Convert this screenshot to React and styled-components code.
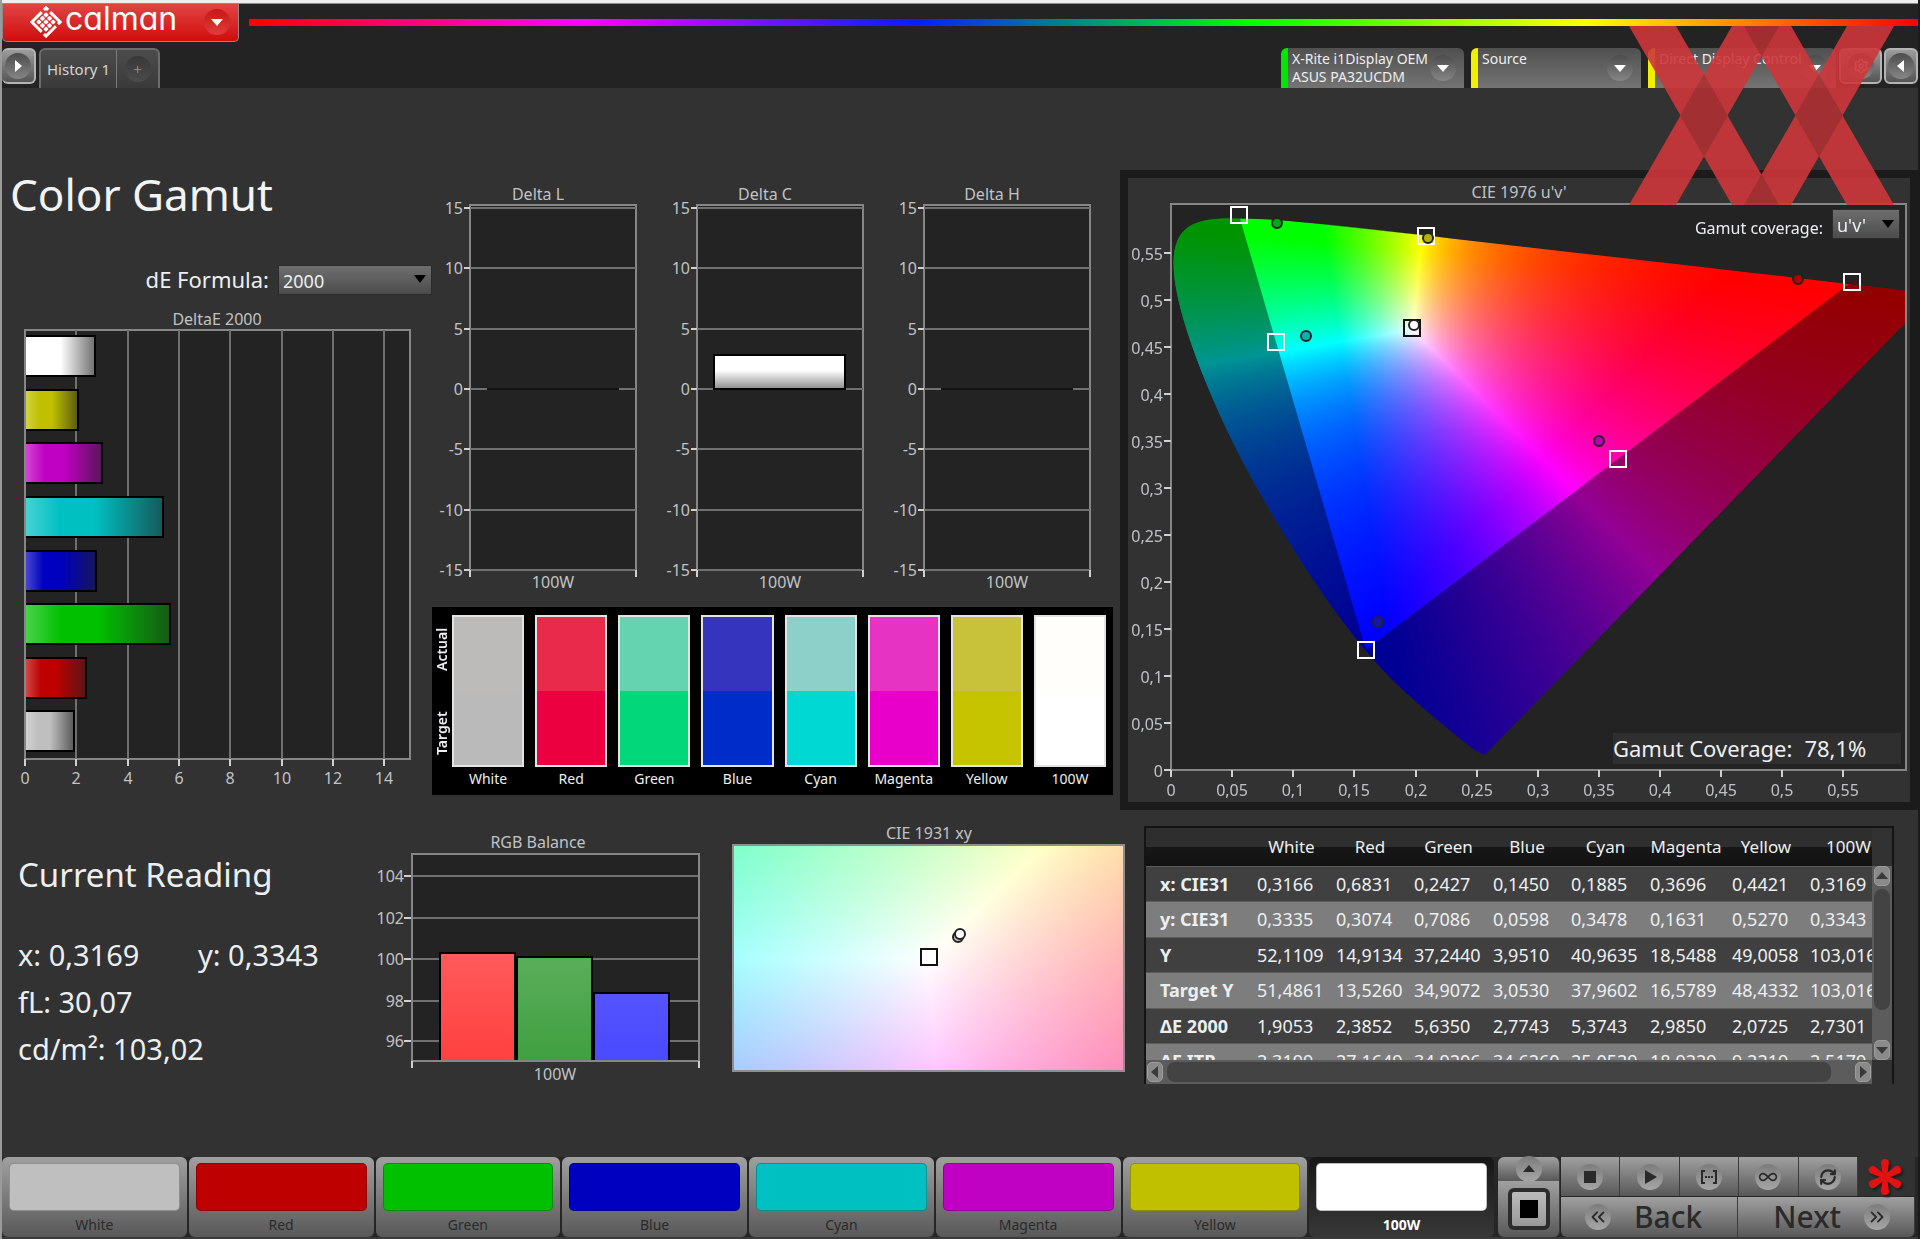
import React, { useLayoutEffect, useRef } from "react";
import styled, { createGlobalStyle, css } from "styled-components";
import { ChevronsLeft, ChevronsRight, Infinity as Loop, RefreshCw, Settings } from "lucide-react";

const GlobalStyle = createGlobalStyle`
    * {
        box-sizing: border-box;
    }
    body {
        margin: 0;
        background: #323232;
        color: #eceff1;
        font-family: "Noto Sans", "Open Sans", sans-serif;
        font-size: 16px;
    }
    button, select {
        font-family: inherit;
        margin: 0;
    }
`;

/* ---------- data ---------- */

const patches = [
    { name: "White", color: "#bfbfbf", actual: "#bcbbba", target: "#bababa", dE: 1.9053 },
    { name: "Red", color: "#bf0000", actual: "#ea2a4a", target: "#ec0040", dE: 2.3852 },
    { name: "Green", color: "#00c000", actual: "#64d3af", target: "#02d879", dE: 5.635 },
    { name: "Blue", color: "#0000c0", actual: "#3434bf", target: "#002cca", dE: 2.7743 },
    { name: "Cyan", color: "#00c0c2", actual: "#8dcfc9", target: "#00d8d4", dE: 5.3743 },
    { name: "Magenta", color: "#c000c2", actual: "#e633c4", target: "#e800ca", dE: 2.985 },
    { name: "Yellow", color: "#c0c000", actual: "#c8c23a", target: "#c6c400", dE: 2.0725 },
    { name: "100W", color: "#ffffff", actual: "#fffefa", target: "#ffffff", dE: 2.7301 },
];

const readings = [
    ["x: CIE31", "0,3166", "0,6831", "0,2427", "0,1450", "0,1885", "0,3696", "0,4421", "0,3169"],
    ["y: CIE31", "0,3335", "0,3074", "0,7086", "0,0598", "0,3478", "0,1631", "0,5270", "0,3343"],
    ["Y", "52,1109", "14,9134", "37,2440", "3,9510", "40,9635", "18,5488", "49,0058", "103,0165"],
    ["Target Y", "51,4861", "13,5260", "34,9072", "3,0530", "37,9602", "16,5789", "48,4332", "103,0165"],
    ["ΔE 2000", "1,9053", "2,3852", "5,6350", "2,7743", "5,3743", "2,9850", "2,0725", "2,7301"],
    ["ΔE ITP", "2,3199", "27,1649", "34,9206", "34,6260", "25,0529", "18,9229", "9,2219", "2,5179"],
];

// spectral locus, CIE 1931 xy
const locus = [
    [0.1741, 0.005], [0.1714, 0.0051], [0.1644, 0.0109], [0.1566, 0.0177], [0.144, 0.0297],
    [0.1355, 0.0399], [0.1241, 0.0578], [0.1096, 0.0868], [0.0913, 0.1327], [0.0687, 0.2007],
    [0.0454, 0.295], [0.0235, 0.4127], [0.0082, 0.5384], [0.0039, 0.6548], [0.0139, 0.7502],
    [0.0389, 0.812], [0.0743, 0.8338], [0.1142, 0.8262], [0.1547, 0.8059], [0.2296, 0.7543],
    [0.3016, 0.6923], [0.3731, 0.6245], [0.4441, 0.5547], [0.5125, 0.4866], [0.5752, 0.4242],
    [0.627, 0.3725], [0.6915, 0.3083], [0.719, 0.2809], [0.7347, 0.2653],
];

const gamutTriangle = [[0.0556, 0.59], [0.5566, 0.519], [0.1593, 0.128]];
const gamutTargets = [...gamutTriangle, [0.2088, 0.568], [0.0857, 0.455], [0.3656, 0.3307]];
const gamutReadings = [
    [0.087, 0.5823, "#00a818"],
    [0.2103, 0.566, "#b4b400"],
    [0.5128, 0.522, "#b80000"],
    [0.1102, 0.4622, "#00b4b8"],
    [0.35, 0.3505, "#b000b8"],
    [0.1693, 0.1576, "#1414b8"],
];

/* ---------- colour maths ---------- */

const xyToRgb = (x, y) => {
    const X = x / y;
    const Z = (1 - x - y) / y;
    const rgb = [
        3.2406 * X - 1.5372 - 0.4986 * Z,
        -0.9689 * X + 1.8758 + 0.0415 * Z,
        0.0557 * X - 0.204 + 1.057 * Z,
    ].map((c) => Math.max(0, c));
    const max = Math.max(...rgb);
    return rgb.map((c) => (c / max) * 255);
};

const uvToXy = (u, v) => {
    const d = 6 * u - 16 * v + 12;
    return [(9 * u) / d, (4 * v) / d];
};

const xyToUv = (x, y) => {
    const d = -2 * x + 12 * y + 3;
    return [(4 * x) / d, (9 * y) / d];
};

const paint = (width, height, toXy) => {
    const layer = document.createElement("canvas");
    layer.width = width;
    layer.height = height;
    const ctx = layer.getContext("2d");
    const image = ctx.createImageData(width, height);
    for (let j = 0; j < height; j++) {
        for (let i = 0; i < width; i++) {
            const [r, g, b] = xyToRgb(...toXy((i + 0.5) / width, 1 - (j + 0.5) / height));
            image.data.set([r, g, b, 255], (j * width + i) * 4);
        }
    }
    ctx.putImageData(image, 0, 0);
    return layer;
};

/* ---------- header ---------- */

const Page = styled.div`
    min-height: 100vh;
    display: flex;
    flex-direction: column;
    position: relative;
    overflow: hidden;
    background: #323232;
    border-left: 2px solid #9b9b9b;
    border-right: 2px solid #1b1b1b;
`;

const Header = styled.header`
    background: #232323;
    border-top: 3px solid #eeeeee;
    height: 88px;
`;

const BrandRow = styled.div`
    display: flex;
    align-items: flex-start;
    gap: 10px;
    height: 45px;
    border-top: 1px solid #8c8c8c;
`;

const BrandButton = styled.button`
    width: 237px;
    height: 38px;
    padding: 0 8px 2px 27px;
    display: flex;
    align-items: center;
    gap: 3px;
    color: white;
    background: linear-gradient(#e24444, #d00d0d);
    border: 1px solid #8a8a8a;
    border-top: none;
    border-radius: 0 0 5px 5px;
`;

const BrandName = styled.span`
    flex: 1;
    text-align: left;
    padding-bottom: 6px;
    font-family: Inter, sans-serif;
    font-size: 32px;
    line-height: 30px;
    font-weight: 400;
    font-feature-settings: "cv11";
`;

const Rainbow = styled.div`
    flex: 1;
    height: 7px;
    margin-top: 15px;
    background: linear-gradient(90deg, #f00, #f0f 20%, #0020ff 40%, #0f0 60%, #ff0 80%, #f00);
`;

const TabRow = styled.div`
    height: 40px;
    display: flex;
    align-items: flex-start;
`;

const Knob = styled.span`
    width: 26px;
    height: 26px;
    flex: none;
    display: flex;
    align-items: center;
    justify-content: center;
    border-radius: 50%;
    color: ${(p) => p.$ink || "white"};
    background: ${(p) => p.$fill || "linear-gradient(#4c4c4c, #868686)"};
`;

const SideButton = styled.button`
    width: ${(p) => (p.$wide ? "43px" : "34px")};
    height: 36px;
    padding: 0;
    display: flex;
    align-items: center;
    justify-content: center;
    background: linear-gradient(#9c9c9c, #555555);
    border: 2px solid #b4b4b4;
    border-left-width: ${(p) => (p.$flush ? "0" : "2px")};
    border-radius: 6px;
`;

const HistoryTabs = styled.div`
    display: flex;
    height: 40px;
    margin-left: 3px;
    border: 2px solid #6c6c6c;
    border-bottom: none;
    border-radius: 6px 6px 0 0;
    background: linear-gradient(#4c4c4c, #3a3a3a);
`;

const HistoryTab = styled.button`
    padding: 0 7px;
    min-width: 42px;
    display: flex;
    align-items: center;
    justify-content: center;
    font-size: 15px;
    color: #d4d4d4;
    background: none;
    border: none;
    &:first-child {
        padding: 0 6px;
    }
    & + & {
        border-left: 1px solid #7a7a7a;
    }
`;

const Devices = styled.div`
    flex: 1;
    display: flex;
    justify-content: flex-end;
    gap: 7px;
`;

const Device = styled.button`
    width: ${(p) => p.$width};
    height: 40px;
    padding: 2px 8px 0 4px;
    display: flex;
    gap: 2px;
    align-items: flex-start;
    text-align: left;
    font-size: 14px;
    line-height: 18px;
    white-space: nowrap;
    color: #eeeeee;
    background: linear-gradient(#505050, #747474);
    border: none;
    border-left: 7px solid ${(p) => p.$status};
    border-radius: 6px 6px 0 0;
    span:first-child {
        flex: 1;
        min-width: 0;
    }
    ${Knob} {
        margin-top: 5px;
    }
`;

const SideButtons = styled.div`
    display: flex;
    gap: 2px;
    margin-left: 3px;
`;

const Watermark = styled.svg`
    position: absolute;
    top: 26px;
    right: 24px;
    width: 265px;
    height: 179px;
    opacity: 0.9;
    pointer-events: none;
`;

/* ---------- content ---------- */

const Main = styled.main`
    flex: 1;
`;

const TopRow = styled.section`
    display: grid;
    grid-template-columns: 430fr 688fr 798fr;
    padding-top: 82px;
`;

const BottomRow = styled.section`
    display: grid;
    grid-template-columns: 370fr 332fr 440fr 750fr 24fr;
    align-items: start;
`;

const ChartSlot = styled.div`
    padding-top: ${(p) => p.$top};
`;

const Chart = styled.svg`
    display: block;
    width: 100%;
    height: auto;
    font-size: 16px;
    fill: #c0c3c5;
    canvas {
        display: block;
        width: 100%;
        height: 100%;
    }
`;

const Title = styled.h1`
    margin: 0;
    padding-left: 8px;
    font-size: 44px;
    line-height: 48px;
    font-weight: 400;
    color: #f2f4f4;
`;

const FormulaRow = styled.div`
    display: flex;
    justify-content: flex-end;
    align-items: center;
    gap: 9px;
    height: 30px;
    margin-top: 46px;
    font-size: 22px;
`;

const SelectBox = styled.span`
    position: relative;
    width: ${(p) => p.$width};
    height: 30px;
    svg {
        position: absolute;
        right: 6px;
        top: 11px;
        pointer-events: none;
    }
`;

const Select = styled.select`
    appearance: none;
    width: 100%;
    height: 100%;
    padding: 2px 4px 0;
    font-size: 18px;
    color: #eceff1;
    background: linear-gradient(#6e6e6e, #4c4c4c);
    border: 1px solid #2a2a2a;
    border-radius: 0;
`;

const Middle = styled.div`
    padding: 8px 7px 0 0;
`;

const DeltaRow = styled.div`
    display: grid;
    grid-template-columns: repeat(3, 1fr);
`;

const SwatchPanel = styled.div`
    display: flex;
    margin-top: 7px;
    padding: 8px 7px 4px 0;
    background: black;
    font-size: 14px;
`;

const SwatchSides = styled.div`
    width: 20px;
    height: 152px;
    display: flex;
    flex-direction: column-reverse;
    gap: 16px;
    font-weight: 600;
    span {
        flex: 1;
        line-height: 20px;
        text-align: center;
        writing-mode: vertical-rl;
        transform: rotate(180deg);
    }
`;

const SwatchGrid = styled.div`
    flex: 1;
    display: grid;
    grid-template-columns: repeat(8, 1fr);
    gap: 11px;
`;

const SwatchItem = styled.div`
    text-align: center;
    line-height: 24px;
`;

const SwatchFill = styled.div`
    height: 152px;
    border: 2px solid #e4e4e4;
    background: linear-gradient(${(p) => p.$actual} 50%, ${(p) => p.$target} 50%);
`;

const GamutPanel = styled.div`
    position: relative;
    border: 8px solid #1b1b1b;
`;

const CoverageControl = styled.label`
    position: absolute;
    top: 31px;
    right: 10px;
    display: flex;
    align-items: flex-end;
    gap: 9px;
`;

const CoverageReadout = styled.div`
    position: absolute;
    right: 9px;
    bottom: 38px;
    width: 288px;
    height: 31px;
    display: flex;
    gap: 12px;
    font-size: 22px;
    line-height: 31px;
    white-space: nowrap;
    background: #2f2f2f;
`;

const Reading = styled.div`
    padding: 41px 0 0 16px;
    font-size: 29px;
    line-height: 47px;
    white-space: nowrap;
    h2 {
        margin: 0 0 33px;
        font-size: 33px;
        font-weight: 400;
    }
`;

const ReadingPair = styled.div`
    display: grid;
    grid-template-columns: 180px 1fr;
`;

/* ---------- results table ---------- */

const TableFrame = styled.div`
    margin-top: 16px;
    display: grid;
    grid-template-columns: 1fr 20px;
    border: 2px solid #141414;
    border-bottom: none;
`;

const TableScroll = styled.div`
    height: 232px;
    overflow: hidden;
`;

const Table = styled.table`
    width: 746px;
    table-layout: fixed;
    border-collapse: collapse;
    font-size: 18px;
    line-height: 24px;
    white-space: nowrap;
    th, td {
        padding: 0 0 0 5px;
        text-align: left;
    }
    tbody th {
        padding-left: 14px;
        font-weight: 700;
    }
`;

const HeadRow = styled.tr`
    height: 38px;
    background: linear-gradient(#2e2e2e 50%, #171717 50%, #121212);
    && th {
        padding: 0;
        text-align: center;
        font-weight: 400;
        font-size: 17px;
    }
`;

const BodyRow = styled.tr`
    height: 35px;
    background: #404040;
    &:nth-child(even) {
        height: 36px;
        background: #7d7d7d;
    }
    th, td {
        border-top: 1px solid #5c5c5c;
    }
`;

const bar = css`
    display: flex;
    align-items: center;
    background: #5c5c5c;
`;

const VerticalBar = styled.div`
    ${bar}
    flex-direction: column;
    margin-top: 38px;
    gap: 3px;
`;

const HorizontalBar = styled.div`
    ${bar}
    height: 24px;
    gap: 4px;
    padding: 0 1px;
`;

const Thumb = styled.div`
    border-radius: 8px;
    background: #434343;
    ${(p) => (p.$vertical ? "width: 16px; height: 121px; margin-bottom: auto;" : "height: 20px; flex: 1; margin-right: 20px;")}
`;

const BarButton = styled.button`
    width: 16px;
    height: 20px;
    padding: 0;
    display: flex;
    align-items: center;
    justify-content: center;
    color: #3a3a3a;
    background: #8a8a8a;
    border: 1px solid #9c9c9c;
    border-radius: 5px;
`;

/* ---------- footer ---------- */

const Footer = styled.footer`
    display: flex;
    padding: 0 3px 0 0;
    background: #262626;
    border-bottom: 2px solid #3a3a3a;
`;

const PatchBar = styled.div`
    flex: 1;
    display: grid;
    grid-template-columns: repeat(8, 1fr);
    gap: 2px;
`;

const steel = "linear-gradient(#a0a0a0, #585858)";

const PatchButton = styled.button`
    height: 80px;
    padding: 6px 7px 0;
    font-size: 14px;
    line-height: 28px;
    font-weight: ${(p) => (p.$active ? 700 : 400)};
    color: ${(p) => (p.$active ? "white" : "#2a2a2a")};
    background: ${(p) => (p.$active ? "linear-gradient(#161616, #383838)" : steel)};
    border: none;
    border-radius: 6px;
`;

const PatchColor = styled.span`
    display: block;
    height: 48px;
    border-radius: 5px;
    border: 1px solid rgba(0, 0, 0, 0.25);
    background: ${(p) => p.$color};
`;

const StopColumn = styled.div`
    width: 62px;
    margin: 0 1px 0 4px;
    display: flex;
    flex-direction: column;
`;

const FlatButton = styled.button`
    flex: ${(p) => p.$flex || 1};
    min-width: 0;
    height: ${(p) => p.$height};
    padding: 0;
    display: flex;
    align-items: center;
    justify-content: center;
    color: #2a2a2a;
    background: ${steel};
    border: none;
    border-right: 1px solid #3c3c3c;
    border-radius: ${(p) => p.$radius || "0"};
`;

const StepButton = styled(FlatButton)`
    padding: 0 24px;
    gap: 23px;
    justify-content: ${(p) => p.$justify};
    font-size: 30px;
    line-height: 36px;
    font-weight: 500;
`;

const StopFrame = styled.span`
    width: 42px;
    height: 42px;
    flex: none;
    display: flex;
    align-items: center;
    justify-content: center;
    border: 4px solid #2c2c2c;
    border-radius: 6px;
    background: linear-gradient(#bcbcbc, #989898);
    &::after {
        content: "";
        width: 18px;
        height: 18px;
        background: black;
    }
`;

const Transport = styled.div`
    width: 354px;
    display: grid;
    gap: 1px;
`;

const TransportRow = styled.div`
    display: flex;
`;

const AsteriskSlot = styled.div`
    width: 57px;
    padding-right: 3px;
    display: flex;
    align-items: center;
    justify-content: center;
    background: #323232;
    svg {
        filter: drop-shadow(2px 2px 1px #1a1a1a);
    }
`;

/* ---------- pieces ---------- */

const Triangle = ({ dir = "down", size = 12 }) => {
    const turn = { down: 0, left: 90, up: 180, right: 270 }[dir];
    return (
        <svg width={size} height={size} viewBox="0 0 12 12" aria-hidden="true">
            <path d="M0 3h12l-6 7z" fill="currentColor" transform={`rotate(${turn} 6 6)`} />
        </svg>
    );
};

const DropDown = ({ id, value, width }) => (
    <SelectBox $width={width}>
        <Select id={id} defaultValue={value}>
            <option>{value}</option>
        </Select>
        <svg width="12" height="8" viewBox="0 0 12 8" aria-hidden="true">
            <path d="M0 0h12L6 8z" fill="black" />
        </svg>
    </SelectBox>
);

const BrandMark = () => (
    <svg width="32" height="32" viewBox="-16 -16 32 32" aria-hidden="true">
        <g transform="rotate(45)">
            <path
                d="M-10 -7v-3h3M-4 -10h14v3M10 -4v14h-3M4 10h-14v-14"
                fill="none"
                stroke="white"
                strokeWidth="3"
            />
            {[-5, 0, 5].map((x) =>
                [-5, 0, 5].map((y) => (
                    <rect key={`${x}${y}`} x={x - 2} y={y - 2} width="4" height="4" rx="1" fill="white" />
                ))
            )}
        </g>
    </svg>
);

const Stripes = () => (
    <Watermark viewBox="0 0 265 179" aria-hidden="true">
        <g fill="#ce373a">
            <path d="M0 0h47l103 179h-47z" />
            <path d="M103 0h47L47 179H0z" />
            <path d="M115 0h47l103 179h-47z" />
            <path d="M218 0h47L162 179h-47z" />
        </g>
        <g fill="#ae3033">
            <path d="M75 48l24 41.500-24 41.500-24-41.500z" />
            <path d="M190 48l24 41.500-24 41.500-24-41.500z" />
            <path d="M115 0h35l-17.500 31z" />
            <path d="M115 179h35l-17.500-31z" />
        </g>
    </Watermark>
);

const GRID = "#707070";
const FRAME = "#868686";

const DeltaEChart = () => {
    const left = 23;
    const top = 36;
    const width = 385;
    const height = 429;
    const unit = width / 15;
    const slot = height / 8;
    const list = [...patches].reverse();
    return (
        <Chart viewBox="0 0 430 500" role="img" aria-label="DeltaE 2000">
            <defs>
                <linearGradient id="sheen">
                    <stop offset="0" stopColor="#fff" stopOpacity="0.28" />
                    <stop offset="0.25" stopColor="#fff" stopOpacity="0" />
                    <stop offset="0.5" stopColor="#222" stopOpacity="0" />
                    <stop offset="1" stopColor="#222" stopOpacity="0.65" />
                </linearGradient>
            </defs>
            <text x="215" y="31" textAnchor="middle">DeltaE 2000</text>
            <rect x={left} y={top} width={width} height={height} fill="#232323" stroke={FRAME} strokeWidth="2" />
            {[0, 2, 4, 6, 8, 10, 12, 14].map((v) => {
                const x = Math.round(left + v * unit);
                return (
                    <g key={v}>
                        {v > 0 && <path d={`M${x} ${top}V${top + height}`} stroke={GRID} strokeWidth="2" />}
                        <path d={`M${x} ${top + height}v7`} stroke="#d0d0d0" strokeWidth="2" />
                        <text x={x} y="490" textAnchor="middle">{v}</text>
                    </g>
                );
            })}
            {list.map((p, i) => {
                const rect = {
                    x: left + 1,
                    y: Math.round(top + slot * i + 6),
                    width: Math.round(p.dE * unit) - 1,
                    height: 40,
                };
                return (
                    <g key={p.name}>
                        <rect {...rect} fill={p.color} />
                        <rect {...rect} fill="url(#sheen)" />
                        <path
                            d={`M${rect.x} ${rect.y}h${rect.width}v${rect.height}H${rect.x}`}
                            fill="none"
                            stroke="black"
                            strokeWidth="2"
                        />
                    </g>
                );
            })}
        </Chart>
    );
};

const DeltaChart = ({ title, value }) => {
    const y = (v) => Math.round(211 - v * 12.07);
    return (
        <Chart viewBox="0 0 227 422" role="img" aria-label={title}>
            <defs>
                <linearGradient id="fade" x2="0" y2="1">
                    <stop offset="0.45" stopColor="white" />
                    <stop offset="1" stopColor="#8c8c8c" />
                </linearGradient>
            </defs>
            <text x="106" y="22" textAnchor="middle">{title}</text>
            <rect x="38" y="27" width="166" height="365" fill="#232323" stroke={FRAME} strokeWidth="2" />
            {[15, 10, 5, 0, -5, -10, -15].map((v) => (
                <g key={v}>
                    <path d={`M38 ${y(v)}h166`} stroke={GRID} strokeWidth="2" />
                    <path d={`M32 ${y(v)}h6`} stroke="#d0d0d0" strokeWidth="2" />
                    <text x="31" y={y(v) + 6} textAnchor="end">{v}</text>
                </g>
            ))}
            <path d="M38 392v7M204 392v7" stroke="#d0d0d0" strokeWidth="2" />
            {value ? (
                <rect x="55" y={y(value)} width="131" height={211 - y(value)} fill="url(#fade)" stroke="black" strokeWidth="2" />
            ) : (
                <path d="M55 211h132" stroke="#141414" strokeWidth="2" />
            )}
            <text x="121" y="410" textAnchor="middle">100W</text>
        </Chart>
    );
};

const GamutCanvas = ({ width, height }) => {
    const ref = useRef(null);
    useLayoutEffect(() => {
        const ctx = ref.current.getContext("2d");
        const px = ([u, v]) => [(u / 0.601) * width, height - (v / 0.602) * height];
        const points = locus.map(([x, y]) => px(xyToUv(x, y)));
        const layer = paint(width, height, (a, b) => uvToXy(a * 0.601, b * 0.602));

        ctx.clearRect(0, 0, width, height);
        ctx.save();
        ctx.beginPath();
        ctx.moveTo(...points[0]);
        for (let i = 1; i < points.length - 1; i++) {
            const [x, y] = points[i];
            const [nx, ny] = points[i + 1];
            ctx.quadraticCurveTo(x, y, (x + nx) / 2, (y + ny) / 2);
        }
        ctx.lineTo(...points[points.length - 1]);
        ctx.closePath();
        ctx.clip();
        ctx.drawImage(layer, 0, 0);

        // dim everything outside of the target gamut
        ctx.beginPath();
        ctx.rect(0, 0, width, height);
        gamutTriangle.map(px).forEach(([x, y], i) => (i ? ctx.lineTo(x, y) : ctx.moveTo(x, y)));
        ctx.closePath();
        ctx.fillStyle = "rgba(0, 0, 0, 0.42)";
        ctx.fill("evenodd");
        ctx.restore();
    }, [width, height]);
    return <canvas ref={ref} width={width} height={height} />;
};

const GamutChart = () => {
    const x = (u) => Math.round(43 + u * 1222.7);
    const y = (v) => Math.round(592 - v * 940);
    const ticks = Array.from({ length: 12 }, (_, i) => i * 0.05);
    const label = (t) => String(Number(t.toFixed(2))).replace(".", ",");
    return (
        <Chart viewBox="0 0 782 624" role="img" aria-label="CIE 1976 u'v'">
            <text x="391" y="20" textAnchor="middle">CIE 1976 u'v'</text>
            <rect x="43" y="26" width="735" height="566" fill="#232323" />
            <foreignObject x="43" y="26" width="735" height="566">
                <GamutCanvas width={735} height={566} />
            </foreignObject>
            <rect x="43" y="26" width="735" height="566" fill="none" stroke={FRAME} strokeWidth="2" />
            {ticks.map((t) => (
                <g key={t}>
                    <path d={`M36 ${y(t)}h7M${x(t)} 592v7`} stroke="#d0d0d0" strokeWidth="2" />
                    <text x="35" y={y(t) + 7} textAnchor="end">{label(t)}</text>
                    <text x={x(t)} y="618" textAnchor="middle">{label(t)}</text>
                </g>
            ))}
            <g fill="none" stroke="white" strokeWidth="2">
                {gamutTargets.map(([u, v]) => (
                    <rect key={u} x={x(u) - 8} y={y(v) - 8} width="16" height="16" />
                ))}
            </g>
            {gamutReadings.map(([u, v, fill]) => (
                <circle key={u} cx={x(u)} cy={y(v)} r="5" fill={fill} stroke="#222" strokeWidth="2" />
            ))}
            <rect x={x(0.1972) - 8} y={y(0.4707) - 8} width="16" height="16" fill="none" stroke="#111" strokeWidth="2" />
            <circle cx={x(0.1985)} cy={y(0.4738)} r="5" fill="white" stroke="#222" strokeWidth="2" />
        </Chart>
    );
};

const balance = [
    { x: 68, y: 127, from: "#ff5a5a", to: "#ff4040" },
    { x: 145, y: 131, from: "#5aae5a", to: "#40a040" },
    { x: 222, y: 167, from: "#5454ff", to: "#4a4aff" },
];

const BalanceChart = () => (
    <Chart viewBox="0 0 332 262" role="img" aria-label="RGB Balance">
        <text x="166" y="22" textAnchor="middle">RGB Balance</text>
        <rect x="40" y="28" width="287" height="207" fill="#232323" />
        {[[104, 50], [102, 92], [100, 133], [98, 175], [96, 215]].map(([v, y]) => (
            <g key={v}>
                <path d={`M40 ${y}h287`} stroke={GRID} strokeWidth="2" />
                <path d={`M32 ${y}h8`} stroke="#d0d0d0" strokeWidth="2" />
                <text x="32" y={y + 6} textAnchor="end">{v}</text>
            </g>
        ))}
        {balance.map((b) => (
            <g key={b.from}>
                <defs>
                    <linearGradient id={`b${b.x}`} x2="0" y2="1">
                        <stop offset="0" stopColor={b.from} />
                        <stop offset="1" stopColor={b.to} />
                    </linearGradient>
                </defs>
                <rect x={b.x} y={b.y} width="75" height={235 - b.y} fill={`url(#b${b.x})`} stroke="black" strokeWidth="2" />
            </g>
        ))}
        <rect x="40" y="28" width="287" height="207" fill="none" stroke={FRAME} strokeWidth="2" />
        <path d="M40 235v7M327 235v7" stroke="#d0d0d0" strokeWidth="2" />
        <text x="183" y="254" textAnchor="middle">100W</text>
    </Chart>
);

const WhiteCanvas = ({ width, height }) => {
    const ref = useRef(null);
    useLayoutEffect(() => {
        const layer = paint(width, height, (a, b) => [0.3127 + (a - 0.5) * 0.053, 0.329 + (b - 0.5) * 0.052]);
        ref.current.getContext("2d").drawImage(layer, 0, 0);
    }, [width, height]);
    return <canvas ref={ref} width={width} height={height} />;
};

const WhiteChart = () => (
    <Chart viewBox="0 0 440 270" role="img" aria-label="CIE 1931 xy">
        <text x="225" y="21" textAnchor="middle">CIE 1931 xy</text>
        <foreignObject x="29" y="27" width="391" height="226">
            <WhiteCanvas width={391} height={226} />
        </foreignObject>
        <rect x="29" y="27" width="391" height="226" fill="none" stroke="#8f8f8f" strokeWidth="2" />
        <rect x="217" y="131" width="16" height="16" fill="white" stroke="#111" strokeWidth="2" />
        <circle cx="254" cy="119" r="5" fill="#bbb" stroke="#222" strokeWidth="2" />
        <circle cx="256" cy="116" r="5" fill="white" stroke="#222" strokeWidth="2" />
    </Chart>
);

const Asterisk = () => (
    <svg width="36" height="38" viewBox="-18 -19 36 38" aria-hidden="true">
        {[0, 60, 120, 180, 240, 300].map((a) => (
            <path key={a} d="M-2 0L-4 -14Q-4 -18 0 -18Q4 -18 4 -14L2 0z" fill="#e01212" transform={`rotate(${a})`} />
        ))}
    </svg>
);

const columns = [106, 79, 78, 79, 78, 79, 82, 78, 87];

const ResultsTable = () => (
    <TableFrame>
        <TableScroll>
            <Table>
                <colgroup>
                    {columns.map((w, i) => (
                        <col key={i} width={w} />
                    ))}
                </colgroup>
                <thead>
                    <HeadRow>
                        <th />
                        {patches.map((p) => (
                            <th key={p.name} scope="col">{p.name}</th>
                        ))}
                    </HeadRow>
                </thead>
                <tbody>
                    {readings.map(([name, ...values]) => (
                        <BodyRow key={name}>
                            <th scope="row">{name}</th>
                            {values.map((v, i) => (
                                <td key={i}>{v}</td>
                            ))}
                        </BodyRow>
                    ))}
                </tbody>
            </Table>
        </TableScroll>
        <VerticalBar>
            <BarButton aria-label="Scroll up"><Triangle dir="up" /></BarButton>
            <Thumb $vertical />
            <BarButton aria-label="Scroll down"><Triangle /></BarButton>
        </VerticalBar>
        <HorizontalBar>
            <BarButton aria-label="Scroll left"><Triangle dir="left" /></BarButton>
            <Thumb />
            <BarButton aria-label="Scroll right"><Triangle dir="right" /></BarButton>
        </HorizontalBar>
    </TableFrame>
);

const transport = [
    { label: "Stop", icon: <path d="M2 2h12v12H2z" fill="currentColor" /> },
    { label: "Read", icon: <path d="M3 1l12 7-12 7z" fill="currentColor" /> },
    {
        label: "Read series",
        icon: (
            <g fill="none" stroke="currentColor" strokeWidth="2">
                <path d="M4 2H1v12h3M12 2h3v12h-3" />
                <path d="M4 8h2M7 8h2M10 8h2" />
            </g>
        ),
    },
];

const key = { $fill: "linear-gradient(#7c7c7c, #a6a6a6)", $ink: "#2a2a2a" };

const App = () => {
    return (
        <>
            <GlobalStyle />
            <Page>
                <Header>
                    <BrandRow>
                        <BrandButton>
                            <BrandMark />
                            <BrandName>calman</BrandName>
                            <Knob $fill="linear-gradient(#c81616, #e03c3c)"><Triangle /></Knob>
                        </BrandButton>
                        <Rainbow />
                    </BrandRow>
                    <TabRow>
                        <SideButton $flush aria-label="Open panel">
                            <Knob><Triangle dir="right" /></Knob>
                        </SideButton>
                        <HistoryTabs>
                            <HistoryTab>History 1</HistoryTab>
                            <HistoryTab aria-label="Add tab">
                                <Knob $fill="linear-gradient(#383838, #4c4c4c)" $ink="#8a8a8a">+</Knob>
                            </HistoryTab>
                        </HistoryTabs>
                        <Devices>
                            <Device $width="183px" $status="#00e800">
                                <span>X-Rite i1Display OEM<br />ASUS PA32UCDM</span>
                                <Knob><Triangle /></Knob>
                            </Device>
                            <Device $width="170px" $status="#f0f000">
                                <span>Source</span>
                                <Knob><Triangle /></Knob>
                            </Device>
                            <Device $width="188px" $status="#f0f000">
                                <span>Direct Display Control</span>
                                <Knob><Triangle /></Knob>
                            </Device>
                        </Devices>
                        <SideButtons>
                            <SideButton $wide aria-label="Settings">
                                <Knob><Settings size={16} /></Knob>
                            </SideButton>
                            <SideButton aria-label="Close panel">
                                <Knob><Triangle dir="left" /></Knob>
                            </SideButton>
                        </SideButtons>
                    </TabRow>
                </Header>

                <Main>
                    <TopRow>
                        <div>
                            <Title>Color Gamut</Title>
                            <FormulaRow>
                                <label htmlFor="formula">dE Formula:</label>
                                <DropDown id="formula" value="2000" width="154px" />
                            </FormulaRow>
                            <DeltaEChart />
                        </div>
                        <Middle>
                            <DeltaRow>
                                <DeltaChart title="Delta L" />
                                <DeltaChart title="Delta C" value={2.8} />
                                <DeltaChart title="Delta H" />
                            </DeltaRow>
                            <SwatchPanel>
                                <SwatchSides>
                                    <span>Target</span>
                                    <span>Actual</span>
                                </SwatchSides>
                                <SwatchGrid>
                                    {patches.map((p) => (
                                        <SwatchItem key={p.name}>
                                            <SwatchFill $actual={p.actual} $target={p.target} />
                                            {p.name}
                                        </SwatchItem>
                                    ))}
                                </SwatchGrid>
                            </SwatchPanel>
                        </Middle>
                        <GamutPanel>
                            <GamutChart />
                            <CoverageControl htmlFor="coverage">
                                Gamut coverage:
                                <DropDown id="coverage" value="u'v'" width="68px" />
                            </CoverageControl>
                            <CoverageReadout>
                                <span>Gamut Coverage:</span>
                                <span>78,1%</span>
                            </CoverageReadout>
                        </GamutPanel>
                    </TopRow>

                    <BottomRow>
                        <Reading>
                            <h2>Current Reading</h2>
                            <ReadingPair>
                                <span>x: 0,3169</span>
                                <span>y: 0,3343</span>
                            </ReadingPair>
                            <div>fL: 30,07</div>
                            <div>cd/m²: 103,02</div>
                        </Reading>
                        <ChartSlot $top="16px">
                            <BalanceChart />
                        </ChartSlot>
                        <ChartSlot $top="8px">
                            <WhiteChart />
                        </ChartSlot>
                        <ResultsTable />
                    </BottomRow>
                </Main>

                <Footer>
                    <PatchBar>
                        {patches.map((p) => (
                            <PatchButton key={p.name} $active={p.name === "100W"}>
                                <PatchColor $color={p.color} />
                                {p.name}
                            </PatchButton>
                        ))}
                    </PatchBar>
                    <StopColumn>
                        <FlatButton $height="24px" $flex="none" $radius="6px 6px 0 0" aria-label="Expand">
                            <Knob {...key}><Triangle dir="up" /></Knob>
                        </FlatButton>
                        <FlatButton $height="56px" $flex="none" $radius="0 0 6px 6px" aria-label="Current patch">
                            <StopFrame />
                        </FlatButton>
                    </StopColumn>
                    <Transport>
                        <TransportRow>
                            {transport.map((t) => (
                                <FlatButton key={t.label} $height="39px" aria-label={t.label}>
                                    <Knob {...key}>
                                        <svg width="16" height="16" viewBox="0 0 16 16">{t.icon}</svg>
                                    </Knob>
                                </FlatButton>
                            ))}
                            <FlatButton $height="39px" aria-label="Read continuously">
                                <Knob {...key}><Loop size={20} /></Knob>
                            </FlatButton>
                            <FlatButton $height="39px" aria-label="Refresh">
                                <Knob {...key}><RefreshCw size={18} strokeWidth={3} /></Knob>
                            </FlatButton>
                            <AsteriskSlot><Asterisk /></AsteriskSlot>
                        </TransportRow>
                        <TransportRow>
                            <StepButton $height="40px" $justify="flex-start" $radius="0 0 0 6px">
                                <Knob {...key}><ChevronsLeft size={22} /></Knob>
                                Back
                            </StepButton>
                            <StepButton $height="40px" $justify="flex-end" $radius="0 0 6px 0">
                                Next
                                <Knob {...key}><ChevronsRight size={22} /></Knob>
                            </StepButton>
                        </TransportRow>
                    </Transport>
                </Footer>

                <Stripes />
            </Page>
        </>
    );
};

export default App;
